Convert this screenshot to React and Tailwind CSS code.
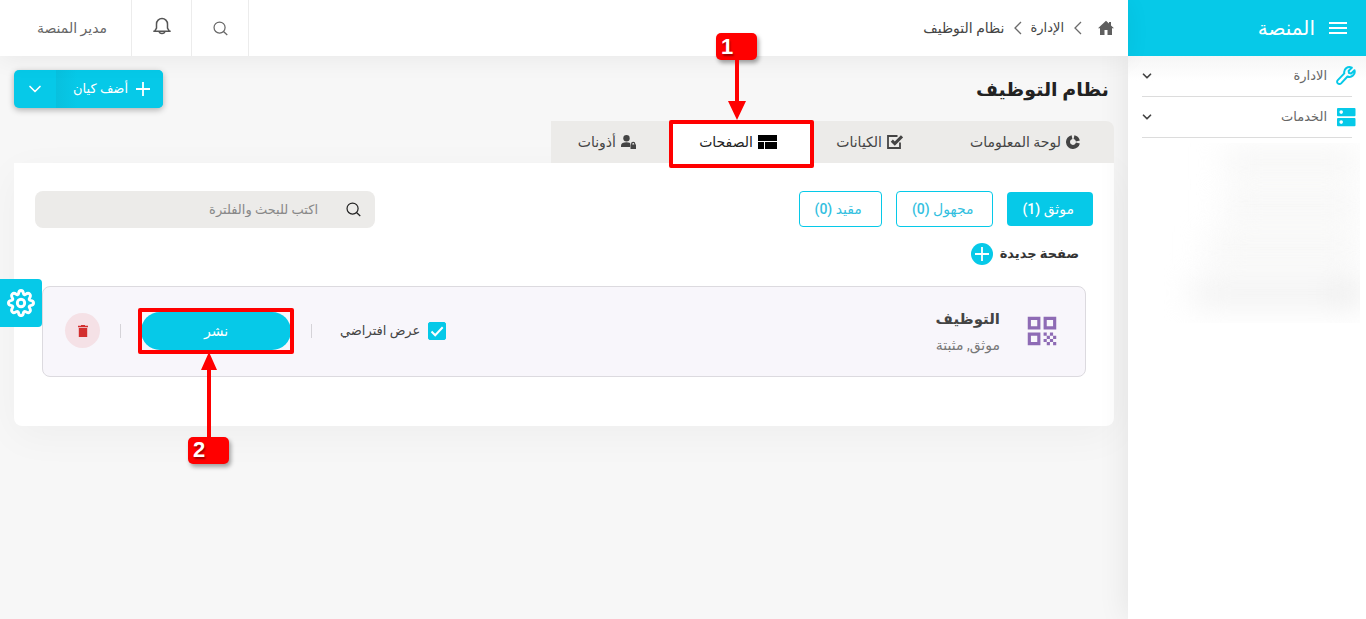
import React from 'react';
import { FiChevronDown } from 'react-icons/fi';
import { MdQrCode } from 'react-icons/md';

const WrenchIcon = () => (
  <svg viewBox="0 0 20 20" className="size-5 text-[#06c9e8]" fill="none" stroke="currentColor" strokeWidth="2" strokeLinejoin="round">
    <path d="M15.8 1.7 12.6 4.9l.4 2.2 2.2.4 3.300-3.200a5.200 5.200 0 0 1-7 6.200l-6.400 6.900a2.300 2.300 0 0 1-3.300-3.300l6.500-6.700a5.200 5.200 0 0 1 7.500-5.700z" />
  </svg>
);

const ServerIcon = () => (
  <svg viewBox="0 0 20 20" className="size-5">
    <rect x="1" y="1" width="18.5" height="8.2" rx="1" fill="#06c9e8" />
    <rect x="1" y="11" width="18.5" height="8.2" rx="1" fill="#06c9e8" />
    <circle cx="5.2" cy="5.1" r="1.8" fill="#fff" />
    <circle cx="5.2" cy="15.1" r="1.8" fill="#fff" />
  </svg>
);

const MenuIcon = () => (
  <svg viewBox="0 0 18 14" className="h-[14px] w-[18px]" stroke="currentColor" strokeWidth="2">
    <path d="M0 2h18M0 7h18M0 12h18" />
  </svg>
);

const HomeIcon = () => (
  <svg viewBox="0 0 16 16" className="size-4 text-[#5f5f5f]" fill="currentColor">
    <path d="M8 .8 0 8.2h2V15h4.5v-5h3v5H14V8.2h2L13 5.4V2h-2v1.600z" />
  </svg>
);

const SearchIcon = ({ className }) => (
  <svg viewBox="0 0 16 16" className={className} fill="none" stroke="currentColor" strokeWidth="1.3">
    <circle cx="7" cy="7" r="5.9" />
    <path d="m11.2 11.2 4 3.8" />
  </svg>
);

const BellIcon = () => (
  <svg viewBox="0 0 18 18" className="mb-1 size-[18px] text-[#555]" fill="none" stroke="currentColor" strokeWidth="1.5">
    <path d="M3.5 11.500V7a5.500 5.500 0 0 1 11 0v4.500M.3 14.300h17.400M3.500 11.200l-1.800 3M14.500 11.200l1.800 3M6.200 14.500c.3 2.600 5.300 2.600 5.600 0" />
  </svg>
);

const ChevronLeft = () => (
  <svg viewBox="0 0 8 14" className="h-[14px] w-2 text-[#6b6b6b]" fill="none" stroke="currentColor" strokeWidth="1.3">
    <path d="M7 1 1 7l6 6" />
  </svg>
);

const PlusIcon = ({ className }) => (
  <svg viewBox="0 0 14 14" className={className} stroke="currentColor" strokeWidth="1.8">
    <path d="M7 0v14M0 7h14" />
  </svg>
);

const DonutIcon = () => (
  <svg viewBox="0 0 14 14" className="size-[14px]" fill="none" stroke="currentColor" strokeWidth="4">
    <path d="M8 2.100A5 5 0 0 1 11.900 6M11.900 8A5 5 0 1 1 6 2.100" />
  </svg>
);

const CheckSquareIcon = () => (
  <svg viewBox="0 0 16 14" className="h-[14px] w-4" fill="none" stroke="currentColor">
    <path d="M10.500 1H1v12h12V7.500" strokeWidth="1.8" />
    <path d="m4.800 5.600 3 3L15 1.300" strokeWidth="3" />
  </svg>
);

const LayoutIcon = () => (
  <svg viewBox="0 0 19 14" className="h-[14px] w-[19px]" fill="#000">
    <path d="M0 0h19v6H0zM0 7h6v7H0zM7 7h12v7H7z" />
  </svg>
);

const UserLockIcon = () => (
  <svg viewBox="0 0 16 14" className="h-[14px] w-4" fill="currentColor">
    <circle cx="5.5" cy="3.2" r="3.2" />
    <path d="M0 12V10.500C0 8.300 2.300 7.300 5.500 7.300c1.500 0 2.700.2 3.700.7V12z" />
    <path d="M10 9.500V9a2.200 2.200 0 0 1 4.400 0v.5h.6V14H9.500V9.500zm1.300 0h1.900V9a.95.95 0 0 0-1.900 0z" />
  </svg>
);

const TrashIcon = () => (
  <svg viewBox="0 0 10 12" className="h-3 w-[10px] text-[#d32f2f]" fill="currentColor">
    <path d="M3 0h4v.8h3v1.400H0V.8h3zM.8 3h8.400v9H.8z" />
  </svg>
);

const GearIcon = () => (
  <svg viewBox="0 0 28 28" className="size-7" fill="none" stroke="currentColor" strokeWidth="2.9" strokeLinejoin="round">
    <path d="M11.500 4.600C12 .4 16 .4 16.500 4.600c.2 1 1.200 1.400 2.100.8 3.300-2.600 6.200.3 3.900 3.800-.6.900-.1 2 .9 2.200 4.200.6 4.200 4.600 0 5.200-1 .2-1.500 1.300-.9 2.200 2.300 3.500-.6 6.400-3.900 3.900-.9-.6-1.900-.2-2.100.8-.5 4.200-4.500 4.200-5 0-.2-1-1.200-1.400-2.100-.8-3.300 2.500-6.200-.4-3.900-3.900.6-.9.1-2-.9-2.200-4.200-.6-4.200-4.600 0-5.200 1-.2 1.500-1.300.9-2.200-2.300-3.500.6-6.400 3.900-3.800.9.600 1.900.2 2.100-.8z" />
    <circle cx="14" cy="14" r="3.7" />
  </svg>
);

const SIDE_LINKS = [
  { label: 'الادارة', icon: <WrenchIcon /> },
  { label: 'الخدمات', icon: <ServerIcon /> },
];

const TABS = [
  { label: 'لوحة المعلومات', icon: <DonutIcon />, width: 'w-[177px]' },
  { label: 'الكيانات', icon: <CheckSquareIcon />, width: 'w-[126px]' },
  { label: 'الصفحات', icon: <LayoutIcon />, width: 'w-[140px]', active: true },
  { label: 'أذونات', icon: <UserLockIcon />, width: 'w-[120px]' },
];

const FILTERS = [
  { label: 'موثق', count: 1, active: true },
  { label: 'مجهول', count: 0 },
  { label: 'مقيد', count: 0 },
];

const StepBadge = ({ children }) => (
  <span
    dir="ltr"
    className="flex h-[27px] w-[41px] items-center rounded-[5px] bg-[#f00] px-[5px] font-['Liberation_Sans',sans-serif] text-[22px] leading-none font-bold text-white shadow-[2px_3px_4px_rgba(0,0,0,0.35)] [text-shadow:1px_2px_2px_rgba(0,0,0,0.4)]"
  >
    {children}
  </span>
);

const Sidebar = () => (
  <aside className="relative z-10 w-[238px] shrink-0 bg-white shadow-[0_0_30px_rgba(0,0,0,0.09)]">
    <div className="flex h-14 items-center gap-[14px] bg-[#06c9e8] px-[19px] text-white">
      <button aria-label="القائمة"><MenuIcon /></button>
      <span className="text-xl">المنصة</span>
    </div>
    <nav className="bg-gradient-to-b from-[#f6f6f6] to-white to-30%">
      {SIDE_LINKS.map((item) => (
        <div key={item.label} className="mx-[14px] border-b border-[#dcdcdc]">
          <button className="-ms-1 flex h-10 w-[calc(100%+4px)] items-center gap-[9px] text-[13px] text-[#666]">
            {item.icon}
            {item.label}
            <FiChevronDown size={14} strokeWidth={3} className="ms-auto -me-[2px] text-[#444]" />
          </button>
        </div>
      ))}
    </nav>
    <div className="me-8 ms-[6px] mt-[5px] flex h-[180px] flex-col justify-between overflow-hidden pt-3 pb-5">
      <div className="me-16 h-4 bg-[#efefee] blur-lg"></div>
      <div className="me-16 h-4 bg-[#efefee] blur-lg"></div>
      <div className="me-12 h-4 bg-[#efefee] blur-lg"></div>
      <div className="me-8 h-5 bg-gradient-to-l from-[#d8d8d8] to-[#ececec] to-20% blur-lg"></div>
    </div>
  </aside>
);

const Header = () => (
  <header className="relative z-10 flex h-14 items-center justify-between bg-white text-sm text-[#666] shadow-[0_4px_24px_rgba(0,0,0,0.06)]">
    <div className="flex items-center gap-2 ps-[14px] text-[#444]">
      <a href="#home" aria-label="الرئيسية" className="me-2"><HomeIcon /></a>
      <ChevronLeft />
      <a href="#admin" className="ms-[2px] text-[13px]">الإدارة</a>
      <ChevronLeft />
      <span className="ms-[2px]">نظام التوظيف</span>
    </div>
    <div className="flex h-full divide-x divide-[#ececec] border-r border-[#ececec]">
      <button aria-label="بحث" className="flex w-[57px] items-center justify-center">
        <SearchIcon className="size-[15px]" />
      </button>
      <button aria-label="التنبيهات" className="flex w-[60px] items-center justify-center">
        <BellIcon />
      </button>
      <button className="w-[131px] ps-6 text-start">مدير المنصة</button>
    </div>
  </header>
);

const Tabs = () => (
  <div className="flex w-fit rounded-tr-lg bg-[#ecebe9] text-sm text-[#444]">
    {TABS.map((tab) => (
      <div key={tab.label} className={`relative ${tab.width}`}>
        <button className={`flex h-[42px] w-full items-center gap-[5px] ps-[34px] whitespace-nowrap ${tab.active ? 'bg-white text-[#222]' : ''}`}>
          {tab.icon}
          {tab.label}
        </button>
        {tab.active && (
          <div className="pointer-events-none absolute -top-px -right-[3px] -bottom-[5px] -left-[2px] z-20 rounded-xs border-4 border-[#f00]">
            <div className="absolute bottom-full left-[43px] mb-[4px] flex flex-col items-center">
              <StepBadge>1</StepBadge>
              <svg viewBox="0 0 18 60" className="h-[60px] w-[18px]" fill="#f00">
                <path d="M7 0h4v41h7L9 60 0 41h7z" />
              </svg>
            </div>
          </div>
        )}
      </div>
    ))}
  </div>
);

const PageRow = () => (
  <div className="mx-[7px] mt-[21px] flex h-[91px] items-center justify-between rounded-lg border border-[#dcdadf] bg-[#f8f6fb] ps-6 pe-[22px] pb-[2px]">
    <div className="flex items-center gap-[23px]">
      <MdQrCode size={38} className="text-[#8e6bb5]" />
      <div className="pt-1">
        <h3 className="text-[15px] leading-6 font-bold text-[#444]">التوظيف</h3>
        <p className="text-sm leading-7 text-[#777]">موثق, مثبتة</p>
      </div>
    </div>
    <div className="flex items-center gap-5">
      <label className="me-2 flex items-center gap-2 text-[13px] text-[#444]">
        <span className="relative flex">
          <input type="checkbox" defaultChecked className="peer size-[18px] appearance-none rounded-xs border border-[#06c9e8] checked:bg-[#06c9e8]" />
          <svg viewBox="0 0 18 18" className="pointer-events-none absolute inset-0 hidden peer-checked:block" fill="none" stroke="#fff" strokeWidth="2">
            <path d="m3.500 9.500 3.700 3.700 7.500-8" />
          </svg>
        </span>
        عرض افتراضي
      </label>
      <span className="h-[14px] w-px bg-[#d5d3d8]"></span>
      <div className="relative">
        <button className="h-[38px] w-[150px] rounded-full bg-[#06c9e8] text-sm text-white">نشر</button>
        <div className="pointer-events-none absolute -inset-x-[3px] -inset-y-1 z-10 rounded-xs border-4 border-[#f00]">
          <div className="absolute top-full left-[46px] flex flex-col items-center">
            <svg viewBox="0 0 16 87" className="h-[87px] w-4" fill="#f00">
              <path d="M8 2 0 20h6v67h4V20h6z" />
            </svg>
            <StepBadge>2</StepBadge>
          </div>
        </div>
      </div>
      <span className="h-[14px] w-px bg-[#d5d3d8]"></span>
      <button aria-label="حذف" className="flex size-[35px] items-center justify-center rounded-full bg-[#f5e1e6]">
        <TrashIcon />
      </button>
    </div>
  </div>
);

const App = () => {
  return (
    <div dir="rtl" className="relative flex min-h-screen bg-[#f7f7f7] font-[Roboto,'DejaVu_Sans',sans-serif]">
      <Sidebar />
      <main className="min-w-0 flex-1">
        <Header />
        <div className="px-[14px] pt-[14px]">
          <div className="flex h-[51px] items-start justify-between ps-[5px]">
            <h1 className="text-[19px] leading-10 font-bold text-[#222]">نظام التوظيف</h1>
            <div className="flex h-[38px] overflow-hidden rounded-[5px] bg-[#06c9e8] text-[13px] text-white shadow-[0_2px_6px_rgba(0,0,0,0.3)]">
              <button className="flex w-[107px] items-center gap-2 bg-gradient-to-l from-[#06c9e8] from-80% to-[#08c0de] ps-[13px]">
                <PlusIcon className="size-[14px]" />
                أضف كيان
              </button>
              <button aria-label="المزيد" className="flex w-[42px] items-center justify-center">
                <FiChevronDown size={20} strokeWidth={2} />
              </button>
            </div>
          </div>
          <div className="relative z-20">
            <Tabs />
          </div>
          <section className="rounded-b-lg bg-white px-[21px] pt-7 pb-[49px] shadow-[0_10px_40px_rgba(0,0,0,0.04)]">
            <div className="flex items-start justify-between">
              <div className="flex items-center gap-[14px] text-sm">
                {FILTERS.map((filter) => (
                  <button
                    key={filter.label}
                    className={`rounded-[4px] ps-[19px] pe-[15px] font-medium ${filter.active ? 'h-[34px] bg-[#06c9e8] text-white' : 'h-9 border border-[#06c9e8] text-[#33bfe0]'}`}
                  >
                    <span className="font-normal">{filter.label}</span> ({filter.count})
                  </button>
                ))}
              </div>
              <label className="flex h-[37px] w-[340px] items-center gap-7 rounded-lg bg-[#ecebe9] px-[14px]">
                <SearchIcon className="size-[15px] shrink-0 text-[#222]" />
                <input
                  type="text"
                  aria-label="بحث"
                  placeholder="اكتب للبحث والفلترة"
                  className="min-w-0 flex-1 bg-transparent text-[13px] outline-none placeholder:text-[#888]"
                />
              </label>
            </div>
            <button className="mt-[15px] flex items-center gap-[7px] ps-[14px] text-[13px] font-bold text-[#333]">
              صفحة جديدة
              <span className="flex size-[22px] items-center justify-center rounded-full bg-[#06c9e8] text-white">
                <PlusIcon className="size-[14px]" />
              </span>
            </button>
            <PageRow />
          </section>
        </div>
      </main>
      <button
        aria-label="الإعدادات"
        className="absolute top-[279px] left-0 z-20 flex h-12 w-[42px] items-center justify-center rounded-r-[4px] bg-[#06c9e8] text-white"
      >
        <GearIcon />
      </button>
    </div>
  );
};

export default App;
